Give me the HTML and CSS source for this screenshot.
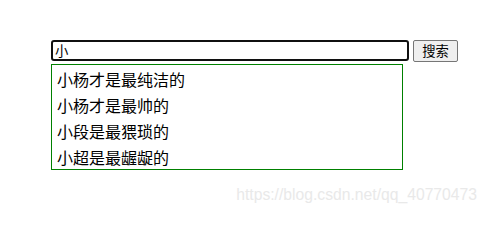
FILE: index.html
```html
<!DOCTYPE html>
<html lang="zh-CN">
<head>
<meta charset="utf-8">
<title>搜索</title>
<link rel="stylesheet" href="styles.css">
</head>
<body>
<div class="page">
  <div class="search-row">
    <input class="search-input" type="text" value="小" autofocus>
    <button class="search-btn" type="button">搜索</button>
  </div>
  <ul class="suggest">
    <li class="suggest-item">小杨才是最纯洁的</li>
    <li class="suggest-item">小杨才是最帅的</li>
    <li class="suggest-item">小段是最猥琐的</li>
    <li class="suggest-item">小超是最龌龊的</li>
  </ul>
</div>
<div class="watermark">https://blog.csdn.net/qq_40770473</div>
</body>
</html>
```
FILE: styles.css
```css
html, body {
  margin: 0;
  padding: 0;
  background: #ffffff;
}
body {
  width: 489px;
  height: 214px;
  position: relative;
  overflow: hidden;
  font-family: "Noto Sans CJK SC", "Liberation Sans", sans-serif;
  color: #000;
}
.page {
  padding: 40px 0 0 51px;
}
.search-row {
  display: flex;
  align-items: flex-start;
  gap: 4px;
}
.search-input {
  box-sizing: border-box;
  width: 358px;
  height: 21px;
  margin: 0;
  padding: 0 2px;
  border: 2px solid #101010;
  border-radius: 3px;
  outline: none;
  background: #fff;
  font-family: "Noto Sans CJK SC", "Liberation Sans", sans-serif;
  font-size: 13.33px;
  color: #000;
  caret-color: #000;
}
.search-btn {
  box-sizing: border-box;
  width: 45px;
  height: 22px;
  margin: 0;
  padding: 0;
  border: 1px solid #767676;
  border-radius: 2px;
  background: #efefef;
  font-family: "Noto Sans CJK SC", "Liberation Sans", sans-serif;
  font-size: 13.33px;
  line-height: 18px;
  color: #000;
}
.suggest {
  box-sizing: border-box;
  list-style: none;
  margin: 2px 0 0 0;
  padding: 0;
  width: 352px;
  border: 1px solid #008000;
}
.suggest-item {
  box-sizing: border-box;
  height: 26px;
  padding: 3px 0 0 5px;
  font-size: 16px;
  line-height: 23px;
  white-space: nowrap;
}
.watermark {
  position: absolute;
  right: 12px;
  top: 186px;
  font-family: "Liberation Sans", sans-serif;
  font-size: 15.7px;
  line-height: 18px;
  color: #e9e9e9;
  white-space: nowrap;
}
```
